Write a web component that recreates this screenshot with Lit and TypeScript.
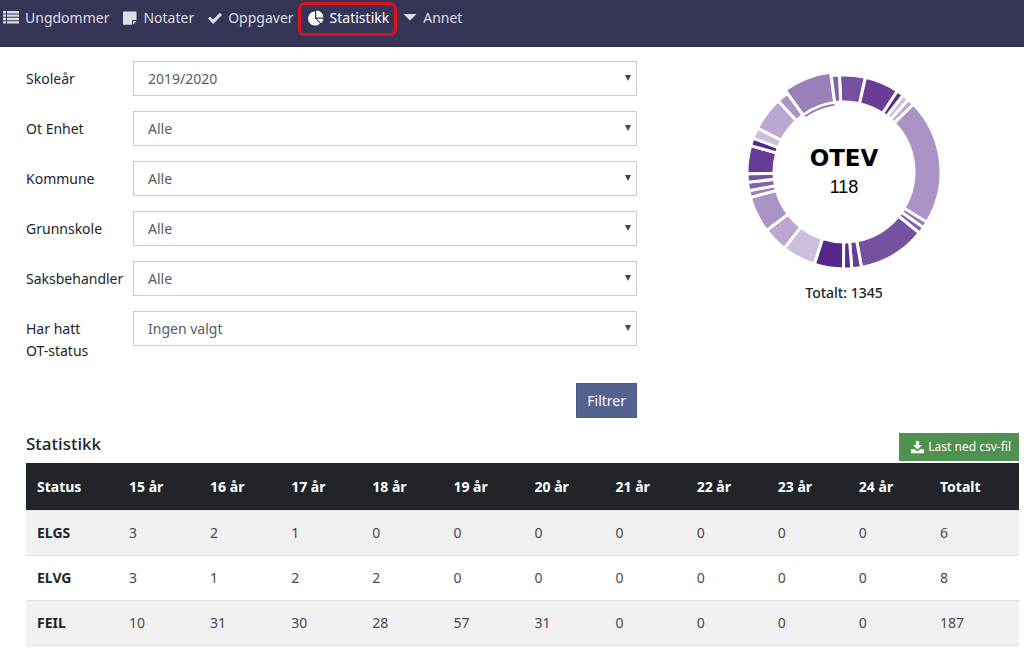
import { LitElement, html, css, svg } from "lit";
import { customElement, state } from "lit/decorators.js";

type Slice = [start: number, end: number, color: string, outer?: number];

// Angles in degrees, clockwise from twelve o'clock.
const SLICES: Slice[] = [
  [-2.7, 12.8, "#7551a0"],
  [12.8, 33.4, "#673d95"],
  [33.4, 37.6, "#5a2d8c"],
  [37.6, 41.7, "#cdbedd"],
  [41.7, 45.7, "#bba8d2"],
  [45.7, 121.2, "#a994c5"],
  [121.2, 125, "#9479b6"],
  [125, 129, "#8463aa"],
  [129, 169.6, "#7551a0"],
  [169.6, 175.4, "#673d95"],
  [175.4, 180.3, "#5a2d8c"],
  [180.3, 197.9, "#55278a"],
  [197.9, 218.1, "#cdbedd"],
  [218.1, 233, "#bba8d2"],
  [233, 254.8, "#a994c5"],
  [254.8, 258.8, "#9a80ba"],
  [258.8, 264, "#8463aa"],
  [264, 269, "#7551a0"],
  [269, 285.8, "#673d95"],
  [285.8, 290.4, "#55278a"],
  [290.4, 296.9, "#cdbedd"],
  [296.9, 317.2, "#bba8d2"],
  [317.2, 324.3, "#a994c5"],
  [324.3, 352.4, "#9a7fb8", 101],
  [352.4, 357.3, "#8463aa"],
];

const polar = (r: number, deg: number) => {
  const a = (deg * Math.PI) / 180;
  return `${(Math.sin(a) * r).toFixed(2)} ${(-Math.cos(a) * r).toFixed(2)}`;
};

const ring = (inner: number, outer: number, from: number, to: number) =>
  `M${polar(outer, from)}A${outer} ${outer} 0 0 1 ${polar(outer, to)}` +
  `L${polar(inner, to)}A${inner} ${inner} 0 0 0 ${polar(inner, from)}Z`;

@customElement("donut-chart")
class DonutChart extends LitElement {
  static styles = css`
    :host { display: block; padding-top: 9px; text-align: center; }
    .chart { display: block; width: 204px; height: 204px; margin: 0 auto; }
    .slice { stroke: #fff; stroke-width: 3px; }
    .name { font: bold 23px "DejaVu Sans", sans-serif; fill: #000; }
    .count { font: 18px "Liberation Sans", sans-serif; fill: #000; }
    .total { margin: 8px 0 0; font-weight: 500; line-height: 22px; color: #212529; }
  `;

  render() {
    return html`
      <svg class="chart" viewBox="-102 -102 204 204" role="img" aria-label="OTEV 118">
        ${SLICES.map(
          ([from, to, color, outer = 97]) =>
            svg`<path class="slice" d=${ring(70, outer, from, to)} fill=${color}></path>`
        )}
        <path d=${ring(67, 69, -35, -8)} fill="#9a7fb8"></path>
        <text class="name" text-anchor="middle" y="-6">OTEV</text>
        <text class="count" text-anchor="middle" y="21">118</text>
      </svg>
      <p class="total">Totalt: 1345</p>
    `;
  }
}

const ICONS = {
  list: svg`<path d="M0 1h3v2.4H0zM4 1h12v2.4H4zM0 4.4h3v2.4H0zM4 4.4h12v2.4H4zM0 7.8h3v2.4H0zM4 7.8h12v2.4H4zM0 11.2h3v2.4H0zM4 11.2h12v2.4H4z"/>`,
  note: svg`<path d="M1 2.100Q1 1.500 1.600 1.500h12.200q.7 0 .7.600V10H11q-1 0-1 1v3.800H1.600q-.6 0-.6-.6zM11 14.800V11h3.500z"/>`,
  check: svg`<path d="M1 8.800 3.200 6.500l3 3L12.800 2.800 15 5.100 6.200 13.900z"/>`,
  pie: svg`<path d="M7 1.500V8.500l5 5A7 7 0 1 1 7 1.500zM8.300.5a7 7 0 0 1 7 7h-7zM8.700 8.700h6.600a7 7 0 0 1-2 4.500z"/>`,
  caret: svg`<path d="M1.500 4h13L8 10.500z"/>`,
};

const NAV: { label: string; icon: keyof typeof ICONS; wide?: boolean; active?: boolean }[] = [
  { label: "Ungdommer", icon: "list", wide: true },
  { label: "Notater", icon: "note" },
  { label: "Oppgaver", icon: "check" },
  { label: "Statistikk", icon: "pie", wide: true, active: true },
  { label: "Annet", icon: "caret" },
];

const FILTERS = [
  { id: "year", label: "Skoleår", value: "2019/2020" },
  { id: "unit", label: "Ot Enhet", value: "Alle" },
  { id: "municipality", label: "Kommune", value: "Alle" },
  { id: "school", label: "Grunnskole", value: "Alle" },
  { id: "officer", label: "Saksbehandler", value: "Alle" },
  { id: "status", label: "Har hatt\nOT-status", value: "Ingen valgt" },
];

const AGES = [15, 16, 17, 18, 19, 20, 21, 22, 23, 24];

@customElement("app-root")
class AppRoot extends LitElement {
  static styles = css`
    :host {
      display: block;
      font: 14px/22px "Noto Sans", "Open Sans", sans-serif;
      color: #212529;
      background: #fff;
    }
    * { box-sizing: border-box; }
    .nav {
      display: flex;
      align-items: flex-start;
      gap: 14px;
      min-height: 47px;
      padding: 7px 3px;
      background: #353657;
      border-bottom: 1px solid #2b2c4b;
    }
    .link {
      position: relative;
      display: flex;
      align-items: center;
      gap: 6px;
      color: #dddde6;
      text-decoration: none;
      white-space: nowrap;
    }
    .link.active { color: #fff; }
    .link.active::after {
      content: "";
      position: absolute;
      inset: -5px -8px -7px -10px;
      border: 3px solid #e01019;
      border-radius: 7px;
    }
    .icon { width: 14px; height: 16px; fill: currentColor; flex: none; }
    .icon.wide { width: 16px; }
    .page { padding: 14px 5px 0 26px; }
    .top { display: grid; grid-template-columns: 611fr 350fr; gap: 32px; align-items: start; }
    .filters { display: grid; gap: 15px; }
    .row { display: grid; grid-template-columns: 107px 1fr; height: 35px; }
    .label { padding-top: 7px; white-space: pre-line; }
    .field { position: relative; }
    .select {
      width: 100%;
      height: 35px;
      padding: 0 30px 0 14px;
      border: 1px solid #cccccf;
      border-radius: 0;
      background: #fff;
      color: #555b61;
      font: inherit;
      appearance: none;
    }
    .arrow {
      position: absolute;
      top: 14px;
      right: 6px;
      width: 6px;
      height: 6px;
      fill: #444;
      pointer-events: none;
    }
    .btn { border: 0; color: #fff; font: inherit; }
    .submit {
      justify-self: end;
      margin-top: 22px;
      height: 35px;
      padding: 0 10px;
      background: #536291;
      border: 1px solid #4a5a8e;
    }
    .bar { display: flex; justify-content: space-between; align-items: flex-start; margin: 15px 0 2px; }
    .title { margin: 0; font-size: 17px; line-height: 22px; font-weight: 500; }
    .csv {
      display: flex;
      align-items: center;
      gap: 4px;
      height: 28px;
      padding: 0 8px 0 12px;
      background: #4f9150;
      font-size: 12px;
    }
    .csv .icon { width: 13px; height: 13px; }
    .table { width: 100%; border-collapse: collapse; table-layout: fixed; }
    .first { width: 92px; }
    .last { width: 90px; }
    th, td { height: 45px; padding: 0 11px; text-align: left; border-top: 1px solid #dee2e6; }
    th { font-weight: 700; }
    td { color: #454a4f; }
    thead th { height: 47px; background: #212529; color: #fff; border-color: #212529; }
    tbody tr:nth-child(odd) { background: #f1f1f1; }
    tbody tr:last-child > * { border-bottom: 1px solid #dee2e6; }
  `;

  @state() private rows = [
    { status: "ELGS", counts: [3, 2, 1, 0, 0, 0, 0, 0, 0, 0], total: 6 },
    { status: "ELVG", counts: [3, 1, 2, 2, 0, 0, 0, 0, 0, 0], total: 8 },
    { status: "FEIL", counts: [10, 31, 30, 28, 57, 31, 0, 0, 0, 0], total: 187 },
  ];

  render() {
    return html`
      <nav class="nav">
        ${NAV.map(
          (n) => html`<a class="link ${n.active ? "active" : ""}" href="#">
            <svg class="icon ${n.wide ? "wide" : ""}" viewBox=${n.wide ? "0 0 16 16" : "1 0 14 16"}
              aria-hidden="true">${ICONS[n.icon]}</svg>${n.label}</a>`
        )}
      </nav>
      <main class="page">
        <div class="top">
          <form class="filters" @submit=${(e: Event) => e.preventDefault()}>
            ${FILTERS.map(
              (f) => html`<div class="row">
                <label class="label" for=${f.id}>${f.label}</label>
                <div class="field">
                  <select class="select" id=${f.id}><option>${f.value}</option></select>
                  <svg class="arrow" viewBox="0 0 6 6" aria-hidden="true"><path d="M0 0h6L3 6z" /></svg>
                </div>
              </div>`
            )}
            <button class="btn submit">Filtrer</button>
          </form>
          <donut-chart></donut-chart>
        </div>
        <div class="bar">
          <h2 class="title">Statistikk</h2>
          <button class="btn csv" type="button">
            <svg class="icon" viewBox="0 0 16 16" aria-hidden="true">
              <path d="M6 0h4v5h3.500L8 10.500 2.500 5H6zM0 10h4.500L8 13l3.500-3H16v5H0z" />
            </svg>Last ned csv-fil
          </button>
        </div>
        <table class="table">
          <colgroup>
            <col class="first" />
            ${AGES.map(() => html`<col />`)}
            <col class="last" />
          </colgroup>
          <thead>
            <tr>
              <th scope="col">Status</th>
              ${AGES.map((a) => html`<th scope="col">${a} år</th>`)}
              <th scope="col">Totalt</th>
            </tr>
          </thead>
          <tbody>
            ${this.rows.map(
              (r) => html`<tr>
                <th scope="row">${r.status}</th>
                ${r.counts.map((c) => html`<td>${c}</td>`)}
                <td>${r.total}</td>
              </tr>`
            )}
          </tbody>
        </table>
      </main>
    `;
  }
}
